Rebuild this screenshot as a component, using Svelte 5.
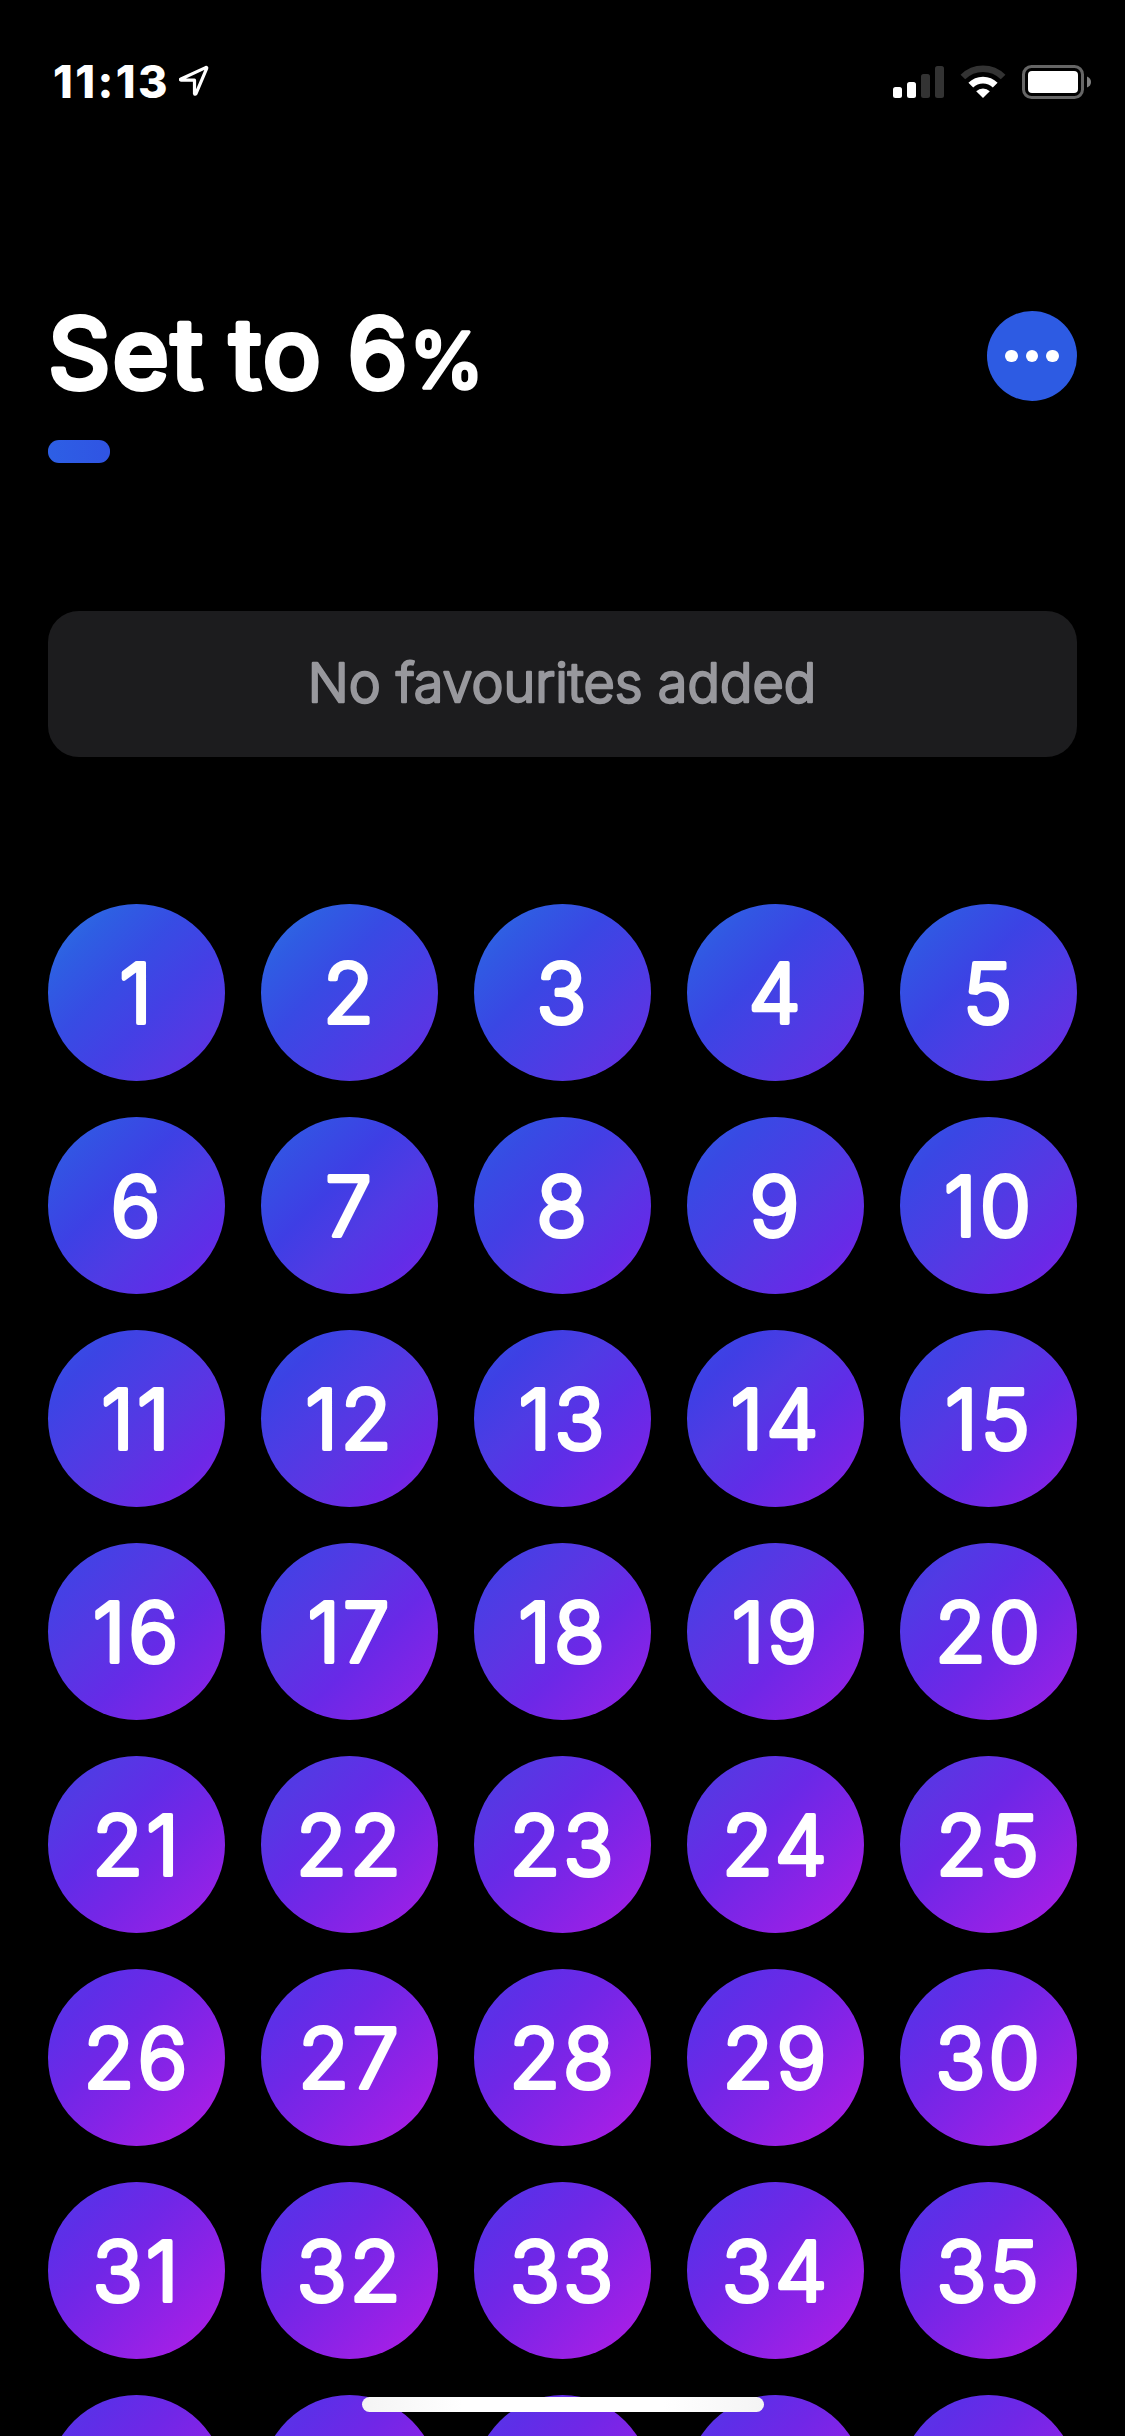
<script lang="ts">
  let level = $state(6);
  const levels = Array.from({ length: 40 }, (_, i) => i + 1);

  // Blues around 240 look too dark, so they get a little more lightness
  const shade = (hue: number) => {
    const lift = Math.max(0, 1 - Math.abs(hue - 242) / 20) * 4.5;
    const drop = Math.max(0, hue - 262) * 0.1;
    const saturation = hue > 255 ? 80 : 76;
    return `hsl(${hue.toFixed(1)} ${saturation}% ${(53 + lift - drop).toFixed(1)}%)`;
  };

  // The hue slides from blue to violet and settles at 26
  const fill = (n: number) => {
    const step = Math.min(n, 26) - 1;
    const start = 215 + step * 1.32;
    const span = 44 - step * 0.26;
    const stops = [0, 0.2, 0.4, 0.6, 0.8, 1].map((t) => shade(start + span * t));
    return `linear-gradient(135deg, ${stops.join(", ")})`;
  };
</script>

<div class="screen">
  <div class="status-bar">
    <div class="clock">
      <span class="time">11:13</span>
      <svg class="location" width="30" height="32" viewBox="0 0 30 32">
        <path d="M2 14 L26.6 2.6 Q28.2 2 27.6 3.6 L17 28.6 Q16 30 15.5 28.4 L15.5 15.2 L2.4 15.2 Q0.4 14.7 2 14 Z" fill="none" stroke="#fff" stroke-width="3.2" stroke-linejoin="round" />
      </svg>
    </div>
    <div class="indicators">
      <svg width="51" height="34" viewBox="0 0 51 34">
        <rect x="0" y="22" width="9" height="11" rx="2.5" fill="#fff" />
        <rect x="14" y="17" width="9" height="16" rx="2.5" fill="#fff" />
        <rect x="28" y="9" width="9" height="24" rx="2.5" fill="#333" />
        <rect x="42" y="1" width="9" height="32" rx="2.5" fill="#333" />
      </svg>
      <svg width="46" height="34" viewBox="0 0 46 34">
        <path d="M2.9 12 A28.5 28.5 0 0 1 43.1 12" fill="none" stroke="#333" stroke-width="6.6" />
        <path d="M10.8 20.1 A17.3 17.3 0 0 1 35.2 20.1" fill="none" stroke="#fff" stroke-width="6.8" />
        <path d="M16.2 26.2 A10 10 0 0 1 29.8 26.2 L23 33 Z" fill="#fff" />
      </svg>
      <svg width="70" height="34" viewBox="0 0 70 34">
        <rect x="1.5" y="1.5" width="59" height="31" rx="8" fill="none" stroke="#666" stroke-width="3" />
        <rect x="6" y="6" width="50" height="22" rx="4" fill="#fff" />
        <path d="M65 11.5 Q69 13 69 17 Q69 21 65 22.5 Z" fill="#808080" />
      </svg>
    </div>
  </div>

  <header>
    <svg class="title rounded" width="600" height="130">
      <text x="0.5" y="96.5">Set to {level}<tspan class="percent" dx="-1">%</tspan></text>
    </svg>
    <button class="more" aria-label="More options">
      <span class="dot"></span>
      <span class="dot"></span>
      <span class="dot"></span>
    </button>
  </header>

  <div class="track">
    <div class="progress" style="width: {level}%"></div>
  </div>

  <div class="favourites">
    <svg class="rounded" width="600" height="146">
      <text x="299" y="90.5" text-anchor="middle">No favourites added</text>
    </svg>
  </div>

  <div class="grid">
    {#each levels as n (n)}
      <button class="level" style="background: {fill(n)}" onclick={() => (level = n)}>
        <svg class="rounded" width="177" height="177">
          <text x="89" y="119.3" text-anchor="middle">{n}</text>
        </svg>
      </button>
    {/each}
  </div>

  <div class="home-indicator"></div>
</div>

<style>
  :global(body) {
    background: #000;
  }

  .screen {
    position: relative;
    box-sizing: border-box;
    width: 1125px;
    height: 2436px;
    padding: 0 48px;
    overflow: hidden;
    background: #000;
    color: #fff;
    font-family: Inter, "Liberation Sans", sans-serif;
  }

  button {
    padding: 0;
    border: 0;
    font-family: inherit;
    cursor: pointer;
  }

  svg {
    display: block;
    flex: none;
  }

  /* A round-joined stroke softens the letter corners */
  .rounded text {
    fill: #fff;
    stroke: #fff;
    stroke-linejoin: round;
  }

  .status-bar {
    display: flex;
    justify-content: space-between;
    height: 246px;
    padding: 65px 0 0 5px;
    margin-right: -15px;
  }

  .clock {
    display: flex;
    gap: 11px;
  }

  .time {
    width: 115px;
    font-size: 45px;
    font-weight: 800;
    line-height: 34px;
    letter-spacing: 2.4px;
    white-space: nowrap;
  }

  .indicators {
    display: flex;
    gap: 16px;
  }

  header {
    display: flex;
    justify-content: space-between;
    height: 90px;
  }

  .title {
    margin-top: -20px;
  }

  .title text {
    font-size: 96px;
    font-weight: 400;
    letter-spacing: 2.6px;
    word-spacing: -5px;
    stroke-width: 5.8px;
  }

  .title .percent {
    font-size: 77px;
    font-weight: 400;
    stroke-width: 3.5px;
  }

  .more {
    display: flex;
    align-items: center;
    justify-content: center;
    gap: 8px;
    width: 90px;
    height: 90px;
    border-radius: 50%;
    background: #2d5be3;
  }

  .dot {
    width: 12.6px;
    height: 12.6px;
    border-radius: 50%;
    background: #fff;
  }

  .track {
    height: 23px;
    margin-top: 39px;
  }

  .progress {
    height: 23px;
    border-radius: 11px;
    background: linear-gradient(90deg, #2d5fe5, #3054e3);
  }

  .favourites {
    display: flex;
    justify-content: center;
    height: 146px;
    margin-top: 148px;
    border-radius: 31px;
    background: #1c1c1e;
  }

  .favourites text {
    fill: #98989d;
    stroke: #98989d;
    stroke-width: 2.4px;
    font-size: 54px;
    font-weight: 300;
  }

  .grid {
    display: grid;
    grid-template-columns: repeat(5, 177px);
    gap: 36px;
    margin-top: 147px;
  }

  .level {
    width: 177px;
    height: 177px;
    border-radius: 50%;
  }

  .level text {
    font-size: 83px;
    font-weight: 300;
    letter-spacing: 3px;
    stroke-width: 4.2px;
  }

  .home-indicator {
    position: absolute;
    left: 362px;
    bottom: 24px;
    width: 402px;
    height: 15px;
    border-radius: 8px;
    background: linear-gradient(90deg, #f4f4f4, #fff 25%, #fff 75%, #f4f4f4);
  }
</style>
